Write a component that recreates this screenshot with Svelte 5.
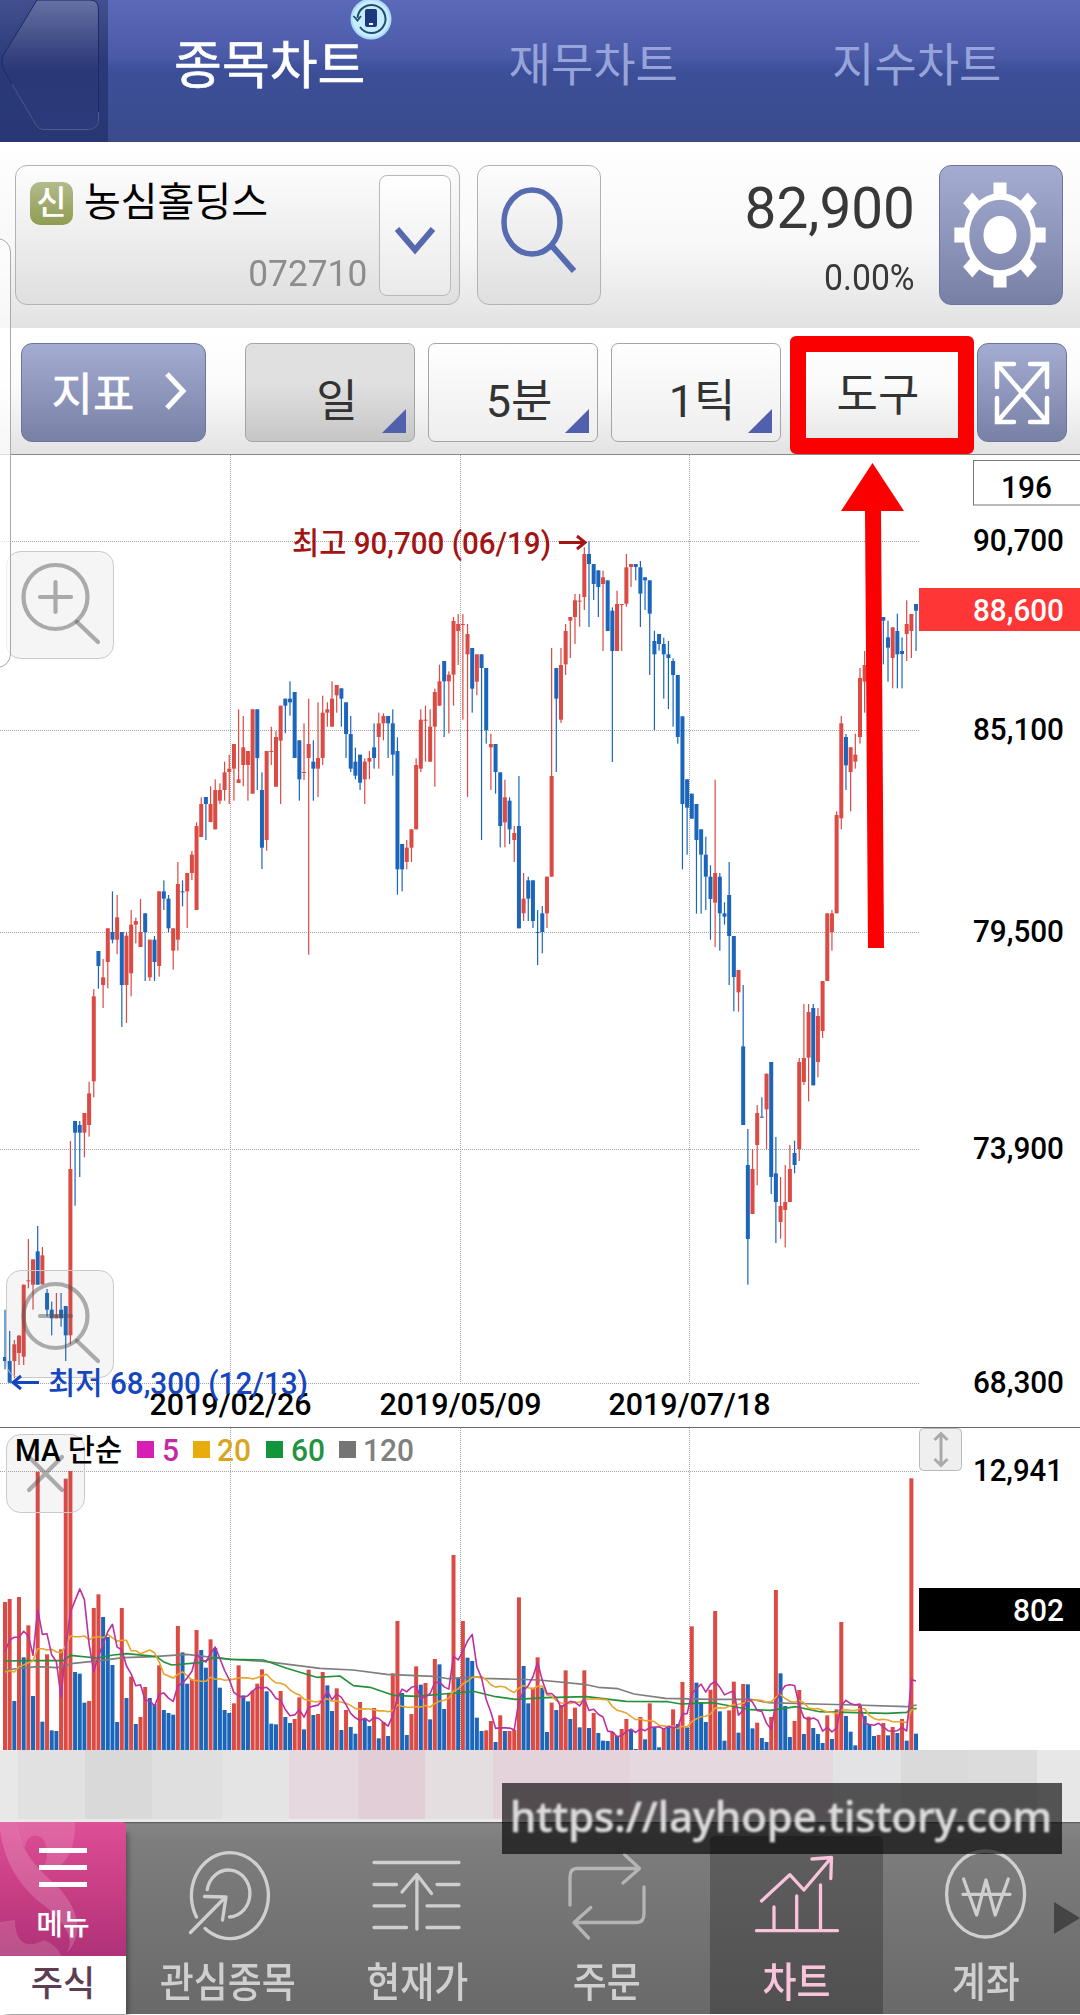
<script>
  const STEP = 4.672;
  const FIRST = 5;
  const cx = (i) => FIRST + STEP * i;

  // Each candle: direction (r = up, b = down), high, body top, body bottom, low; in thirds of a pixel.
  const candleText = `
b 2579 2721 2733 2758|b 2643 2733 2798 2798|r 2670 2683 2733 2785|r 2655 2657 2709 2745|r 2504 2504 2720 2745|r 2367 2491 2494 2515|r 2428 2428 2504 2579|b 2328 2404 2504 2504|r 2391 2416 2503 2503|b 2517 2529 2579 2600|
b 2555 2579 2605 2656|r 2529 2593 2605 2605|b 2529 2579 2605 2630|b 2568 2568 2656 2733|r 2073 2157 2656 2683|b 2013 2013 2048 2267|b 2013 2025 2048 2181|r 1989 1989 2048 2122|r 1895 1930 2025 2060|r 1617 1639 1894 1942|
b 1503 1503 1548 1616|r 1527 1582 1605 1674|r 1435 1435 1536 1615|b 1324 1446 1469 1480|r 1335 1402 1469 1513|b 1446 1446 1605 1731|r 1446 1457 1605 1719|r 1380 1424 1570 1639|r 1403 1413 1424 1480|r 1347 1446 1491 1491|
b 1390 1390 1446 1593|r 1469 1469 1582 1593|b 1458 1469 1536 1593|r 1324 1324 1548 1580|b 1291 1324 1346 1380|b 1335 1346 1435 1446|r 1435 1435 1502 1559|r 1236 1302 1469 1502|b 1291 1324 1327 1369|r 1269 1269 1324 1434|
r 1203 1214 1269 1290|r 1117 1128 1380 1380|r 1042 1062 1161 1161|b 1041 1041 1062 1170|r 1009 1062 1116 1117|r 988 1020 1138 1138|r 1000 1020 1052 1062|r 935 967 1020 1052|r 914 956 966 1062|r 882 882 956 1052|
r 778 988 999 999|r 798 892 945 1009|r 903 903 945 1052|r 778 778 1031 1031|b 778 778 924 1020|b 967 1020 1193 1257|r 903 903 1170 1202|r 830 903 906 945|r 843 861 1010 1010|r 767 767 872 1062|
b 746 746 767 850|b 694 746 757 797|b 726 726 924 924|b 871 871 988 1052|r 820 966 969 990|r 746 882 924 1514|b 871 935 956 1052|r 757 924 956 1041|r 737 788 924 945|r 757 778 788 830|
r 694 746 830 830|r 705 705 736 788|b 715 715 746 830|b 757 757 852 924|b 798 852 956 966|b 893 935 977 988|b 914 914 998 1020|r 925 935 988 1062|r 903 924 935 988|b 820 892 924 956|
r 788 820 861 956|r 790 798 820 871|b 798 798 820 924|b 778 820 914 977|b 862 903 1258 1334|b 1182 1182 1258 1324|r 1170 1193 1236 1258|r 1138 1138 1193 1236|r 925 945 1138 1138|r 778 809 956 966|
r 767 809 812 935|r 778 830 935 935|r 716 726 830 1010|r 644 694 767 767|b 633 633 694 861|r 664 674 694 850|r 501 513 674 767|r 492 522 543 645|r 492 522 525 809|r 522 552 613 1041|
b 594 594 716 788|r 613 613 695 736|b 613 613 654 1170|b 654 654 841 881|r 851 882 892 1020|b 882 882 966 1031|b 967 967 1128 1192|r 989 1042 1117 1192|b 1042 1052 1138 1182|r 1128 1149 1170 1236|
b 978 1128 1435 1435|r 1269 1346 1390 1413|b 1280 1291 1346 1413|b 1291 1291 1413 1434|b 1380 1446 1449 1545|b 1368 1390 1446 1510|r 1280 1280 1390 1434|r 594 978 1280 1280|b 654 654 746 966|r 594 645 809 819|
r 522 543 643 675|r 501 501 512 624|r 432 451 501 582|r 432 452 455 530|r 292 312 441 480|b 274 312 342 531|b 342 342 402 450|b 361 361 411 501|r 362 382 402 603|b 391 391 543 543|
b 472 482 603 936|r 422 462 603 603|r 462 462 465 603|r 312 352 461 470|r 342 342 351 411|b 342 342 351 391|b 333 352 431 531|b 381 382 391 480|b 391 391 491 675|b 542 573 613 840|
b 552 552 582 602|b 563 582 613 746|b 573 613 624 777|b 625 633 675 830|b 675 675 861 881|b 799 799 1062 1258|b 988 988 1073 1214|b 1031 1031 1106 1106|b 1062 1062 1170 1391|b 1138 1138 1214 1391|
b 1160 1214 1280 1380|b 1246 1280 1347 1469|r 989 1269 1358 1491|b 1269 1280 1390 1502|b 1357 1390 1400 1424|b 1236 1335 1458 1605|b 1458 1458 1581 1684|r 1560 1560 1627 1685|b 1605 1789 2025 2025|b 2037 2145 2367 2504|
r 2097 2157 2292 2292|r 1965 1989 2085 2206|b 1942 2000 2003 2003|r 1871 1871 1978 2098|b 1836 1836 2181 2232|b 2061 2170 2256 2379|r 2181 2268 2316 2366|r 2145 2256 2280 2392|r 2085 2157 2256 2256|b 2072 2109 2145 2170|
r 1824 1836 2097 2133|r 1662 1824 1896 1905|r 1662 1686 1823 1954|b 1662 1674 1906 1906|r 1674 1698 1836 1882|r 1593 1593 1743 1764|r 1390 1390 1593 1593|r 1380 1390 1446 1502|r 1084 1095 1390 1390|r 798 820 1105 1138|
b 852 861 946 1020|r 892 892 966 1084|r 851 914 935 956|r 654 684 861 881|r 603 645 695 788|r 580 600 660 700|r 540 560 620 660|r 510 530 600 640|b 501 501 512 643|b 512 562 593 695|
r 532 532 624 715|b 491 543 613 715|b 562 603 612 715|r 451 522 552 633|r 492 492 543 624|b 462 462 482 603`;

  const candles = candleText.replace(/\n/g, '').split('|').map((s, i) => {
    const [dir, ...v] = s.trim().split(' ');
    const [high, top, bottom, low] = v.map((n) => 450 + Number(n) / 3);
    return { x: cx(i), dir, high, top, bottom, low };
  });

  // Volume bar tops, in thirds of a pixel above a base of 990.
  const volumeText = `r546 r537 b843 r531 b712 r616 b828 r155 b905 r703 b931 b933 r688 r176 r153 b756 b761 b848 r843 r564
r523 b591 b651 b735 b906 r564 b834 r770 b912 r891 r801 b834 b852 r736 b870 b879 b884 r618 b697 b791
r778 r630 b690 b743 r658 b684 b803 b870 b879 r850 r736 b826 b844 r812 r791 r748 b814 b911 b913 r813
b891 b909 r897 r832 b928 r749 b885 r882 r756 b796 b873 r805 b930 r870 b921 b941 r846 b895 b918 r864
b955 r906 b948 r760 r603 b819 b945 r882 r739 b794 r789 b898 r717 b733 b867 r822 r405 b772 r603 b713
b723 b893 b933 r931 r903 b966 r886 b933 r933 r930 r532 b738 b850 r803 r712 b803 b936 r848 b870 r855
r751 b897 r863 b922 r751 b924 r879 b939 b962 b963 r936 b948 r927 r897 b928 b987 r891 b958 r850 b921
b982 r925 b918 r868 b912 r786 b922 r619 b788 b846 b906 r809 r573 b874 b962 r871 r785 b938 r792 b793
b925 r908 b954 b966 r891 r510 b760 b858 b951 r903 r810 b942 r890 b924 b942 b969 r886 b957 r868 r606
b888 b935 b976 r856 b888 b912 b948 r945 r909 b946 r921 b939 r897 b962 r175 b941`;
  const volumes = volumeText.split(/\s+/).map((s) => ({ dir: s[0], y: Number(s.slice(1)) }));

  const average = (n, lead) =>
    volumes
      .map((_, i) => {
        const y = i < lead.length ? lead[i] : volumes.slice(i - n + 1, i + 1).reduce((a, v) => a + v.y, 0) / n;
        return `${cx(i).toFixed(1)},${(1420 + y / 3).toFixed(1)}`;
      })
      .join(' ');
  const ma5 = average(5, [695, 660, 652, 652]);
  const ma20 = average(20, [756, 752, 756, 740, 735, 728, 722, 686, 686, 690, 688, 696, 698, 678, 648, 650, 650, 648, 659]);

  const toLine = (t) => t.split(' ').map((p) => { const [x, y] = p.split(','); return `${x / 3},${1420 + y / 3}`; }).join(' ');
  const ma60 = toLine('15,723 90,722 190,722 211,706 290,714 340,705 380,701 470,710 490,725 515,735 600,728 645,712 690,718 790,720 860,745 950,772 1020,768 1060,797 1110,802 1180,826 1250,829 1330,822 1420,814 1487,830 1546,838 1641,833 1760,830 1878,844 2003,845 2044,852 2139,848 2252,869 2311,871 2388,860 2459,875 2566,878 2661,880 2720,877 2734,866 2750,866');
  const ma120 = toLine('15,750 110,740 170,743 220,730 300,722 370,713 460,710 560,703 680,717 800,725 960,745 1060,750 1160,763 1300,769 1345,776 1430,771 1451,775 1617,780 1760,794 1795,802 1854,806 1902,822 1997,835 2139,838 2252,838 2305,848 2447,852 2566,855 2720,860 2750,855');

  const fill = { r: '#dc4a44', b: '#1b66bb' };
  const columns = [230.5, 460.5, 689.5];
  const levels = [
    { y: 541.5, text: '90,700', base: 551 },
    { y: 730.5, text: '85,100', base: 740 },
    { y: 932.5, text: '79,500', base: 942 },
    { y: 1149.5, text: '73,900', base: 1158.5 },
    { y: 1383.5, text: '68,300', base: 1392.5 }
  ];
  const dates = ['2019/02/26', '2019/05/09', '2019/07/18'];
  const legend = [
    { x: 137, tx: 162, text: '5', color: '#d81fb4', ink: '#c42aa4' },
    { x: 193, tx: 217, text: '20', color: '#e8ad0c', ink: '#d9a520' },
    { x: 266, tx: 291, text: '60', color: '#12963c', ink: '#23933f' },
    { x: 339, tx: 363, text: '120', color: '#757575', ink: '#808080' }
  ];
  const teeth = [0, 45, 90, 135, 180, 225, 270, 315];
  const strip = [
    [18, '#e8e8e8'], [67, '#e1e1e1'], [67, '#d9d9da'], [70, '#dfdfdf'], [67, '#e4e4e4'], [69, '#e5d8de'], [67, '#e2ced7'],
    [68, '#e5dee1'], [137, '#e4d3da'], [203, '#e5d9df'], [68, '#e3e2e4'], [67, '#dadada'], [69, '#dcdcdc'], [43, '#e7e7e7']
  ];
</script>

<div class="screen">
  <header>
    <div class="back">
      <svg width="108" height="142" viewBox="0 0 108 142">
        <defs>
          <linearGradient id="backFill" x1="0" y1="0" x2="0" y2="1">
            <stop offset="0" stop-color="#6570a3" /><stop offset=".42" stop-color="#36437f" /><stop offset=".55" stop-color="#2a3877" /><stop offset="1" stop-color="#2c3a7b" />
          </linearGradient>
        </defs>
        <path d="M37 0H90Q98.500 0 98.500 9V119Q98.500 129.500 88 129.500H43Q39 129.500 36 125L4 70Q0 62 4 54Z" fill="url(#backFill)" stroke="#1d2960" />
        <path d="M98.500 112V119Q98.500 129.500 88 129.500H43Q39 129.500 36 125L12 84" fill="none" stroke="#5d6797" stroke-width=".8" />
      </svg>
    </div>
    <nav class="tabs">
      <span class="tab on">종목차트
        <svg class="sync" width="42" height="42" viewBox="0 0 42 42">
          <circle cx="21" cy="20" r="20.500" fill="#a9dafa" />
          <circle cx="21" cy="20" r="18.500" fill="#c7ecff" />
          <path d="M7.500 19A14 14 0 1 1 10 28" fill="none" stroke="#234c6b" stroke-width="2" />
          <path d="M3.500 17L7.500 21.500L11 17" fill="none" stroke="#234c6b" stroke-width="1.800" />
          <rect x="15" y="10" width="12" height="18" rx="2" fill="#1b397c" /><rect x="19" y="24" width="4" height="2" fill="#fff" />
        </svg>
      </span>
      <span class="tab">재무차트</span>
      <span class="tab">지수차트</span>
    </nav>
  </header>

  <section class="quote">
    <div class="stock">
      <div class="info">
        <div class="name"><span class="mark">신</span><span>농심홀딩스</span></div>
        <div class="code">072710</div>
      </div>
      <button class="drop" aria-label="종목 선택">
        <svg width="40" height="28" viewBox="0 0 40 28"><path d="M2 2L20 23L38 2" fill="none" stroke="#5868ae" stroke-width="6" /></svg>
      </button>
    </div>
    <button class="search" aria-label="검색">
      <svg width="80" height="90" viewBox="0 0 80 90"><ellipse cx="33" cy="37" rx="28" ry="32" fill="none" stroke="#566bb0" stroke-width="5.500" /><path d="M53 61L75 86" stroke="#566bb0" stroke-width="6" /></svg>
    </button>
    <div class="price"><b>82,900</b><span>0.00%</span></div>
    <button class="gear" aria-label="설정">
      <svg width="94" height="108" viewBox="-47 -54 94 108">
        <g transform="scale(.87 1)">
          <circle r="38.500" fill="none" stroke="#fff" stroke-width="6.500" />
          {#each teeth as t}<rect x="-7.500" y="-52.500" width="15" height="14" fill="#fff" transform="rotate({t})" />{/each}
          <circle r="19" fill="#fff" />
        </g>
      </svg>
    </button>
  </section>

  <section class="tools">
    <button class="blue index">지표<svg width="22" height="38" viewBox="0 0 22 38"><path d="M2 2L18 19L2 36" fill="none" stroke="#fff" stroke-width="5" /></svg></button>
    <button class="period active">일</button>
    <button class="period">5분</button>
    <button class="period">1틱</button>
    <button class="draw">도구</button>
    <button class="blue full" aria-label="전체 화면">
      <svg width="58" height="66" viewBox="0 0 58 66" fill="none" stroke="#fff" stroke-width="4.500" stroke-linecap="round">
        <path d="M4 4L54 62M54 4L4 62M21 4H4V27M37 4H54V27M4 38V62H21M37 62H54V38" />
      </svg>
    </button>
  </section>

  <svg class="plot" width="1080" height="973" viewBox="0 454 1080 973">
    <path d="M0 454.500H1080" stroke="#8b8b8b" />
    <g stroke="#a2a2a2" stroke-dasharray="1 1">
      {#each levels as l}<path d="M0 {l.y}H919" />{/each}
      {#each columns as c}<path d="M{c} 455V1383" />{/each}
    </g>
    <g class="tool">
      <rect x="6.500" y="551.500" width="107" height="107" rx="14" />
      <circle cx="55.500" cy="597" r="32" /><path d="M77 622L98 642M40 597H71M55.500 582V612" />
    </g>
    {#each candles as c}
      <rect x={c.x - 0.6} y={c.high} width="1.200" height={c.low - c.high} fill={fill[c.dir]} />
      <rect x={c.x - 2} y={c.top} width="4" height={c.bottom - c.top} fill={fill[c.dir]} />
    {/each}
    <g class="tool">
      <rect x="6.500" y="1270.500" width="107" height="107" rx="14" />
      <circle cx="55.500" cy="1316" r="32" /><path d="M77 1341L98 1361M40 1316H71" />
    </g>
    <g class="high">
      <text x="292" y="553.500" textLength="259" lengthAdjust="spacingAndGlyphs">최고 90,700 (06/19)</text>
      <path d="M559 542.500H585M577 536L585 542.500L577 549" />
    </g>
    <g class="labels">
      {#each dates as d, i}<text x={columns[i] - 81} y="1415" textLength="162" lengthAdjust="spacingAndGlyphs">{d}</text>{/each}
      {#each levels as l}<text x="973" y={l.base} textLength="91" lengthAdjust="spacingAndGlyphs">{l.text}</text>{/each}
      <rect x="973.500" y="460.500" width="108" height="44.500" fill="#fff" stroke="#777" />
      <text x="1001" y="498" textLength="51" lengthAdjust="spacingAndGlyphs">196</text>
      <rect x="919" y="588" width="161" height="43" fill="#ff3636" />
      <text class="light" x="973" y="620.500" textLength="91" lengthAdjust="spacingAndGlyphs">88,600</text>
    </g>
    <g class="low">
      <text x="48" y="1394" textLength="260" lengthAdjust="spacingAndGlyphs">최저 68,300 (12/13)</text>
      <path d="M39 1382.500H13M21 1376L13 1382.500L21 1389" />
    </g>
    <path d="M872.500 463L904 511H881L884 948H868L865 511H841Z" fill="#fb0000" />
  </svg>

  <svg class="plot" width="1080" height="323" viewBox="0 1427 1080 323">
    <path d="M0 1427.500H1080" stroke="#6b6b6b" />
    <g stroke="#a2a2a2" stroke-dasharray="1 1">
      <path d="M0 1471.500H919" />
      {#each columns as c}<path d="M{c} 1428V1750" />{/each}
    </g>
    {#each volumes as v, i}
      <rect x={cx(i) - 2} y={1420 + v.y / 3} width="4" height={(990 - v.y) / 3} fill={fill[v.dir]} />
    {/each}
    <g fill="none" stroke-width="1.600" stroke-linejoin="round">
      <polyline points={ma120} stroke="#7e7e7e" />
      <polyline points={ma60} stroke="#23913c" />
      <polyline points={ma20} stroke="#e5a62b" />
      <polyline points={ma5} stroke="#bd309f" />
    </g>
    <g class="tool">
      <rect x="6.500" y="1434.500" width="78" height="78" rx="14" /><path d="M29 1457L62 1490M62 1457L29 1490" />
    </g>
    <g class="labels">
      <text x="15" y="1460.500" textLength="107" lengthAdjust="spacingAndGlyphs">MA 단순</text>
      {#each legend as l}
        <rect x={l.x} y="1441" width="17" height="17" fill={l.color} />
        <text x={l.tx} y="1460.500" textLength={l.text.length * 17} lengthAdjust="spacingAndGlyphs" style:fill={l.ink}>{l.text}</text>
      {/each}
      <text x="973" y="1481" textLength="90" lengthAdjust="spacingAndGlyphs">12,941</text>
      <rect x="919" y="1588" width="161" height="43" fill="#000" />
      <text class="light" x="1013" y="1620.500" textLength="51" lengthAdjust="spacingAndGlyphs">802</text>
    </g>
    <rect x="919.500" y="1428.500" width="42" height="42" rx="4" fill="#efefef" stroke="#b9b9b9" />
    <path d="M941 1434V1465M934.500 1440L941 1433.500L947.500 1440M934.500 1459L941 1465.500L947.500 1459" fill="none" stroke="#aaa" stroke-width="3" />
  </svg>

  <div class="strip">
    {#each strip as [w, color]}<i style:width="{w}px" style:background={color}></i>{/each}
  </div>

  <footer>
    <div class="menu">
      <div class="pink">
        <svg class="swirl" width="126" height="134" viewBox="0 0 126 134" fill="#fff">
          <path d="M0 8C4 40 20 66 45 84C62 98 77 116 66 132C86 112 78 84 55 62C34 44 18 24 17 0H0Z" opacity=".17" />
          <path d="M17 0C17 12 20 20 25 26C26 8 48 9 47 32C47 40 44 44 42 47C62 51 76 32 75 0Z" opacity=".14" />
          <path d="M0 100L15 98C15 122 28 127 44 118C55 122 60 130 61 134H0Z" opacity=".15" />
        </svg>
        <span class="bars"><i></i><i></i><i></i></span>
        <span class="menutext">메뉴</span>
      </div>
      <div class="kind">주식</div>
    </div>
    <div class="items">
      <div class="item">
        <svg width="90" height="94" viewBox="184.500 1848 90 94"><path d="M198 1918A38.500 43 0 1 1 206.600 1929.500M208.700 1890.700A21.500 23.500 0 1 1 231 1918M192 1933.500L227 1898M206 1897.500L227.500 1898L224 1921" /></svg>
        <span>관심종목</span>
      </div>
      <div class="item">
        <svg width="90" height="94" viewBox="373.500 1848 90 94"><path d="M375.500 1863.500H460.500M375.500 1885.500H398M438.500 1885.500H460.500M375.500 1906.800H406M428.500 1906.800H460.500M375.500 1928.500H408M428.500 1928.500H460.500M418.400 1930V1876M403.500 1893L418.400 1875.500L433 1894.500" /></svg>
        <span>현재가</span>
      </div>
      <div class="item dim">
        <svg width="90" height="94" viewBox="563.500 1848 90 94"><path d="M571.500 1906V1878Q571.500 1869.500 578 1869.500H640.500M626 1855.500L641 1869.500L624.500 1884M645.500 1888V1915Q645.500 1923.500 638 1923.500H576M592.300 1908.500L575.500 1923.500L590 1939" /></svg>
        <span>주문</span>
      </div>
      <div class="item selected">
        <svg width="90" height="94" viewBox="751.500 1848 90 94"><path d="M761 1902L789.300 1875.700L803.400 1891L831 1858.500M811.500 1860L831 1858.500L830.300 1879.500M773.500 1908V1931M796.200 1897V1931M820 1886V1931M756 1931.700H837" /></svg>
        <span>차트</span>
      </div>
      <div class="item">
        <svg width="90" height="94" viewBox="941 1848 90 94"><ellipse cx="985.600" cy="1895" rx="39" ry="43" /><path d="M963.600 1880L976.600 1916L986 1881L995.200 1916L1008.300 1880M963 1895.300H1010" /></svg>
        <span>계좌</span>
      </div>
    </div>
    <svg class="more" width="26" height="32" viewBox="0 0 26 32"><path d="M0 0L26 16L0 32Z" fill="#444" /></svg>
  </footer>

  <div class="drawer"></div>
  <div class="frame"></div>
  <div class="address"><svg width="560" height="71" viewBox="0 0 560 71"><text x="8" y="49" textLength="542" lengthAdjust="spacingAndGlyphs">https://layhope.tistory.com</text></svg></div>
</div>

<style>
  :global(body) { margin: 0; background: #fff; }
  .screen { position: relative; width: 1080px; height: 2015px; overflow: hidden; display: flex; flex-direction: column; font-family: Roboto, 'Noto Sans CJK KR', sans-serif; background: #fff; }
  * { box-sizing: border-box; }
  svg { display: block; flex: none; }
  button { font: inherit; padding: 0; margin: 0; display: flex; align-items: center; justify-content: center; flex: none; }

  header { display: flex; height: 142px; flex: none; background: linear-gradient(#5a6ab9, #4a5aa7 40%, #3c4e97 50%, #3a4c8e 97%, #3d4a78); }
  .back { width: 108px; background: linear-gradient(#43508f, #2a3979 45%, #283774); }
  .tabs { display: flex; flex: 1; }
  .tab { position: relative; width: 323.500px; height: 122px; display: flex; align-items: center; justify-content: center; font-size: 46px; color: #97a4da; }
  .tab.on { font-size: 52px; color: #fff; -webkit-text-stroke: .6px #fff; }
  .sync { position: absolute; left: 242px; top: -1px; }

  .quote { display: flex; height: 186px; flex: none; padding: 23px 17px 0 15px; background: linear-gradient(#fff, #f8f8f8 55%, #e2e2e2); }
  .stock { width: 445px; height: 140px; display: flex; border: 1px solid #b3b3b3; border-radius: 12px; padding: 9px 8px 9px 14px; background: linear-gradient(#fdfdfd, #dfdfdf); }
  .info { width: 351px; display: flex; flex-direction: column; justify-content: space-between; }
  .name { display: flex; align-items: center; gap: 11px; height: 56px; font-size: 40px; line-height: 58px; color: #000; }
  .mark { width: 43px; height: 43px; border-radius: 10px; display: flex; align-items: center; justify-content: center; font-size: 33px; line-height: 40px; font-weight: 500; color: #fff; background: linear-gradient(#b2bb8c, #8f9c50); }
  .code { font-size: 36px; line-height: 41px; color: #8c8c8c; text-align: right; padding-right: 12px; transform: scaleX(.98); transform-origin: right; }
  .drop { width: 72px; height: 121px; border: 1px solid #b8b8b8; border-radius: 8px; padding-top: 10px; background: linear-gradient(#fff, #eaeaea); }
  .search { width: 124px; height: 140px; margin-left: 17px; border: 1px solid #b3b3b3; border-radius: 12px; background: linear-gradient(#fdfdfd, #dfdfdf); }
  .search svg { margin: -11px 0 0 -1px; }
  .price { flex: 1; display: flex; flex-direction: column; align-items: flex-end; padding: 10px 24px 0 0; color: #383838; }
  .price b { font-weight: 400; font-size: 57.500px; line-height: 68px; transform: scaleX(.985); transform-origin: right; }
  .price span { font-size: 37.500px; line-height: 44px; margin-top: 12px; transform: scaleX(.9); transform-origin: right; }
  .gear { width: 124px; height: 140px; border: 1px solid #6b759f; border-radius: 12px; background: linear-gradient(#a4acd2, #7880a6); }
  .gear svg { margin: -1px 0 0 -3px; }

  .tools { display: flex; height: 126px; flex: none; padding: 15px 13px 0 21px; background: linear-gradient(#fff, #fbfbfb 45%, #e3e3e3); }
  .tools button { height: 99px; color: #333; }
  .tools .blue { border: 1px solid #6b759f; border-radius: 11px; background: linear-gradient(#a4acd2, #7880a6); color: #fff; }
  .tools .index { width: 185px; font-size: 45px; gap: 31px; padding-left: 12px; padding-bottom: 3px; -webkit-text-stroke: .6px #fff; }
  .tools .period { position: relative; width: 170px; margin-left: 13px; border: 1px solid #a5a5a5; border-radius: 7px; background: linear-gradient(#fefefe, #eee); font-size: 45px; padding: 9px 0 0 12px; }
  .tools .active { margin-left: 39px; background: linear-gradient(#e0e0e0 40%, #c6c6c6); padding-left: 14px; }
  .period::after { content: ''; position: absolute; right: 8px; bottom: 8px; border-left: 24px solid transparent; border-bottom: 24px solid #5060ac; }
  .tools .draw { width: 183px; margin-left: 9px; border: 0; background: none; font-size: 45px; padding: 0 7px 2px 0; }
  .tools .full { width: 90px; margin-left: 4px; }
  .frame { position: absolute; left: 790px; top: 336px; width: 184px; height: 118px; border: 16px solid #fb0000; border-radius: 6px; }

  .plot text { font-size: 30.500px; font-weight: 500; }
  .labels text { fill: #000; }
  .labels .light { fill: #fff; }
  .high text { fill: #a31414; }
  .high path { stroke: #a31414; stroke-width: 3; fill: none; }
  .low text { fill: #1546c0; }
  .low path { stroke: #1546c0; stroke-width: 3; fill: none; }
  .tool { fill: none; stroke: rgba(80, 80, 80, .46); stroke-width: 4.200; stroke-linecap: round; }
  .tool rect { fill: rgba(120, 120, 120, .07); stroke: #c9c9c9; stroke-width: 1; }

  .strip { display: flex; height: 72px; flex: none; border-bottom: 3px solid #e9e9e9; }
  .strip i { height: 69px; flex: none; }

  footer { position: relative; display: flex; height: 192px; flex: none; background: linear-gradient(#555 0, #858585 2px, #7d7d7d 20px, #696969); }
  .menu { width: 126px; flex: none; display: flex; flex-direction: column; box-shadow: 4px 8px 5px -2px rgba(0, 0, 0, .35); }
  .pink { position: relative; height: 134px; display: flex; flex-direction: column; align-items: center; padding-top: 26px; background: linear-gradient(#dd4f96, #c93e85 50%, #ae3278); border-top-right-radius: 4px; }
  .swirl { position: absolute; left: 0; top: 0; }
  .bars { position: relative; display: flex; flex-direction: column; gap: 12px; }
  .bars i { width: 48px; height: 5px; background: #fff; }
  .menutext { position: relative; margin-top: 19px; font-size: 29px; line-height: 38px; font-weight: 500; color: #fff; }
  .kind { height: 58px; display: flex; align-items: center; justify-content: center; font-size: 35px; line-height: 56px; font-weight: 500; color: #5d3d53; background: #fff; transform-origin: bottom; }
  .items { display: flex; flex: 1; padding-left: 7px; overflow: hidden; }
  .item { width: 189.500px; flex: none; display: flex; flex-direction: column; align-items: center; padding-top: 25px; color: #cfcfcf; }
  .item svg { fill: none; stroke: currentColor; stroke-width: 3.300; stroke-linecap: round; stroke-linejoin: round; }
  .item span { font-size: 37px; line-height: 40px; font-weight: 500; margin-top: 23px; transform: scaleY(1.12); }
  .dim svg { color: #b5b5b5; }
  .selected { width: 173px; margin: 14px 8px 0 8.500px; padding-top: 11px; color: #f9c3dc; background: linear-gradient(#5f5f5f, #505050); border-radius: 5px 5px 0 0; }
  .more { position: absolute; right: 0; top: 80px; }

  .drawer { position: absolute; left: -20px; top: 238px; width: 31px; height: 430px; border: 1px solid #aaa; border-radius: 14px; background: rgba(255, 255, 255, .7); }
  .address { position: absolute; left: 502px; top: 1783px; width: 560px; height: 71px; background: rgba(0, 0, 0, .64); }
  .address text { font: 500 42px 'Noto Sans', 'Open Sans', sans-serif; fill: #dcdcdc; stroke: #dcdcdc; stroke-width: .6; filter: blur(.9px); }
</style>
